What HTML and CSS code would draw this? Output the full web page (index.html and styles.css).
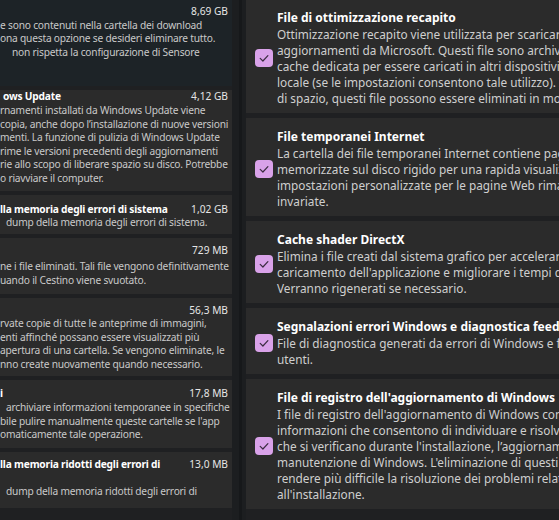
FILE: index.html
```
<!DOCTYPE html>
<html lang="it">
<head>
<meta charset="utf-8">
<title>Pulizia disco</title>
<link rel="stylesheet" href="styles.css">
</head>
<body>
<div class="screen">
  <section class="left">
    <article class="lcard c1">
      <div class="lrow"><span class="lt"></span><span class="ls">8,69 GB</span></div>
      <div class="ln">e sono contenuti nella cartella dei download</div>
      <div class="ln">ona questa opzione se desideri eliminare tutto.</div>
      <div class="ln ind12">non rispetta la configurazione di Sensore</div>
    </article>
    <article class="lcard c2">
      <div class="lrow"><span class="lt ind3">ows Update</span><span class="ls">4,12 GB</span></div>
      <div class="ln">rnamenti installati da Windows Update viene</div>
      <div class="ln">copia, anche dopo l’installazione di nuove versioni</div>
      <div class="ln">menti. La funzione di pulizia di Windows Update</div>
      <div class="ln">rime le versioni precedenti degli aggiornamenti</div>
      <div class="ln">rie allo scopo di liberare spazio su disco. Potrebbe</div>
      <div class="ln">o riavviare il computer.</div>
    </article>
    <article class="lcard c3">
      <div class="lrow"><span class="lt">lla memoria degli errori di sistema</span><span class="ls">1,02 GB</span></div>
      <div class="ln ind6">dump della memoria degli errori di sistema.</div>
    </article>
    <article class="lcard c4">
      <div class="lrow"><span class="lt"></span><span class="ls">729 MB</span></div>
      <div class="lbody">
        <div class="ln">ne i file eliminati. Tali file vengono definitivamente</div>
        <div class="ln">uando il Cestino viene svuotato.</div>
      </div>
    </article>
    <article class="lcard c5">
      <div class="lrow"><span class="lt"></span><span class="ls">56,3 MB</span></div>
      <div class="ln">rvate copie di tutte le anteprime di immagini,</div>
      <div class="ln">enti affinché possano essere visualizzati più</div>
      <div class="ln">apertura di una cartella. Se vengono eliminate, le</div>
      <div class="ln">nno create nuovamente quando necessario.</div>
    </article>
    <article class="lcard c6">
      <div class="lrow"><span class="lt">i</span><span class="ls">17,8 MB</span></div>
      <div class="ln ind6">archiviare informazioni temporanee in specifiche</div>
      <div class="ln">bile pulire manualmente queste cartelle se l'app</div>
      <div class="ln">omaticamente tale operazione.</div>
    </article>
    <article class="lcard c7">
      <div class="lrow"><span class="lt">lla memoria ridotti degli errori di</span><span class="ls">13,0 MB</span></div>
      <div class="ln blank">&nbsp;</div>
      <div class="ln ind6">dump della memoria ridotti degli errori di</div>
    </article>
  </section>

  <div class="divider"></div>

  <section class="right">
    <article class="rcard r1">
      <span class="check"><svg viewBox="0 0 18 18" width="18" height="18"><path d="M5.2 9.4 L7.9 12 L12.9 6.6"/></svg></span>
      <div class="rbody">
        <div class="rtitle">File di ottimizzazione recapito</div>
        <div class="rl">Ottimizzazione recapito viene utilizzata per scaricare gli</div>
        <div class="rl">aggiornamenti da Microsoft. Questi file sono archiviati in una</div>
        <div class="rl">cache dedicata per essere caricati in altri dispositivi della rete</div>
        <div class="rl">locale (se le impostazioni consentono tale utilizzo). In caso di carenza</div>
        <div class="rl">di spazio, questi file possono essere eliminati in modo sicuro.</div>
      </div>
    </article>
    <article class="rcard">
      <span class="check"><svg viewBox="0 0 18 18" width="18" height="18"><path d="M5.2 9.4 L7.9 12 L12.9 6.6"/></svg></span>
      <div class="rbody">
        <div class="rtitle">File temporanei Internet</div>
        <div class="rl">La cartella dei file temporanei Internet contiene pagine Web</div>
        <div class="rl">memorizzate sul disco rigido per una rapida visualizzazione. Le</div>
        <div class="rl">impostazioni personalizzate per le pagine Web rimarranno</div>
        <div class="rl">invariate.</div>
      </div>
    </article>
    <article class="rcard">
      <span class="check"><svg viewBox="0 0 18 18" width="18" height="18"><path d="M5.2 9.4 L7.9 12 L12.9 6.6"/></svg></span>
      <div class="rbody">
        <div class="rtitle">Cache shader DirectX</div>
        <div class="rl">Elimina i file creati dal sistema grafico per accelerare i tempi di</div>
        <div class="rl">caricamento dell'applicazione e migliorare i tempi di risposta.</div>
        <div class="rl">Verranno rigenerati se necessario.</div>
      </div>
    </article>
    <article class="rcard">
      <span class="check"><svg viewBox="0 0 18 18" width="18" height="18"><path d="M5.2 9.4 L7.9 12 L12.9 6.6"/></svg></span>
      <div class="rbody">
        <div class="rtitle">Segnalazioni errori Windows e diagnostica feedback</div>
        <div class="rl">File di diagnostica generati da errori di Windows e feedback degli</div>
        <div class="rl">utenti.</div>
      </div>
    </article>
    <article class="rcard">
      <span class="check"><svg viewBox="0 0 18 18" width="18" height="18"><path d="M5.2 9.4 L7.9 12 L12.9 6.6"/></svg></span>
      <div class="rbody">
        <div class="rtitle">File di registro dell'aggiornamento di Windows</div>
        <div class="rl">I file di registro dell'aggiornamento di Windows contengono</div>
        <div class="rl">informazioni che consentono di individuare e risolvere i problemi</div>
        <div class="rl">che si verificano durante l'installazione, l’aggiornamento o la</div>
        <div class="rl">manutenzione di Windows. L'eliminazione di questi file può</div>
        <div class="rl">rendere più difficile la risoluzione dei problemi relativi</div>
        <div class="rl">all'installazione.</div>
      </div>
    </article>
  </section>
</div>
</body>
</html>
```
FILE: styles.css
```
* { box-sizing: border-box; margin: 0; padding: 0; }

html, body {
  width: 559px;
  height: 520px;
  overflow: hidden;
  background: #1f2022;
}

body {
  font-family: "Noto Sans", "Open Sans", sans-serif;
  -webkit-font-smoothing: antialiased;
}

.screen {
  display: flex;
  height: 520px;
}

/* ---------- left column ---------- */
.left {
  width: 232px;
  flex: none;
  display: flex;
  flex-direction: column;
  gap: 4px;
  overflow: hidden;
}

.lcard {
  background: #2b2b2b;
  padding: 5px 4px 6px 0;
  font-size: 10.2px;
  letter-spacing: -0.2px;
  line-height: 13.6px;
  color: #c9c9c9;
  white-space: nowrap;
  overflow: hidden;
}

.lrow {
  display: flex;
  justify-content: space-between;
}

.lt {
  font-weight: 700;
  color: #ffffff;
}

.ls {
  color: #e6e6e6;
  letter-spacing: 0;
}

.ind3 { padding-left: 3px; }
.ind6 { padding-left: 6px; }
.ind12 { padding-left: 12px; }

.c1 {
  background: #1d2327;
  padding-bottom: 27px;
}

.c2 {
  padding-top: 0;
  padding-bottom: 5px;
}

.c3 { padding-top: 8px; padding-bottom: 4px; }

.c4 { padding-top: 6px; padding-bottom: 6px; }
.c4 .lbody { margin-top: 3px; }

.c5 { padding-top: 6px; padding-bottom: 5px; }

.c6 { padding-top: 7px; padding-bottom: 6px; }

.c7 { padding-top: 6px; padding-bottom: 9px; }

/* ---------- divider ---------- */
.divider {
  width: 14px;
  flex: none;
  background: linear-gradient(to right,
    #1c1e20 0, #1c1e20 7px,
    #16181a 7px, #16181a 10px,
    #1c1e20 10px);
}

/* ---------- right column ---------- */
.right {
  flex: 1;
  min-width: 0;
  overflow: hidden;
  display: flex;
  flex-direction: column;
  gap: 5px;
  margin-top: -1px;
}

.rcard {
  width: 420px;
  flex: none;
  background: #2b2b2b;
  display: flex;
  align-items: center;
  gap: 4px;
  padding: 10px 0 7px 9px;
  color: #cfcfcf;
  font-size: 11.8px;
  line-height: 16px;
  white-space: nowrap;
}

.check {
  width: 18px;
  height: 18px;
  flex: none;
  border-radius: 4px;
  background: #d9a2e9;
  display: flex;
}

.check path {
  fill: none;
  stroke: #3b2c41;
  stroke-width: 1.2;
  stroke-linecap: round;
  stroke-linejoin: round;
}

.rtitle {
  font-weight: 700;
  font-size: 12px;
  line-height: 17px;
  color: #ffffff;
}
```
